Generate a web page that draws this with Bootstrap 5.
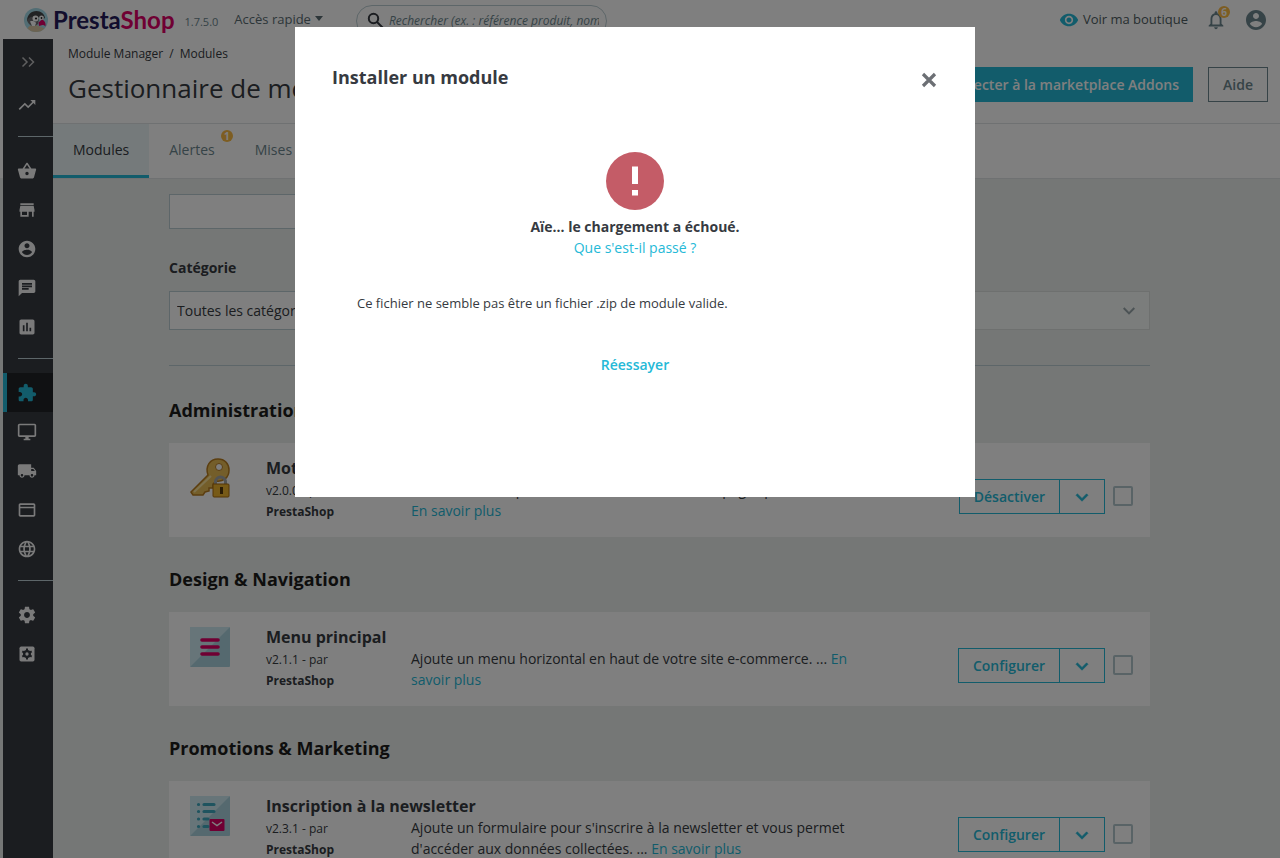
<!DOCTYPE html>
<html lang="fr">
<head>
<meta charset="utf-8">
<meta name="viewport" content="width=device-width, initial-scale=1">
<title>Gestionnaire de modules • PrestaShop</title>
<link href="https://cdn.jsdelivr.net/npm/bootstrap@5.3.0/dist/css/bootstrap.min.css" rel="stylesheet">
<style>
:root { --ps-blue: #25b9d7; --ps-dark: #363a41; --ps-grey: #6c868e; --ps-page: #eaeeec; --ps-line: #bbcdd2; }
body { font: 14px/21px "Open Sans", "Noto Sans", sans-serif; color: var(--ps-dark); background: var(--ps-page); height: 100vh; }
a { color: var(--ps-blue); text-decoration: none; }
svg { display: block; flex: none; }
svg:not([fill]) { fill: currentColor; }
.btn { --bs-btn-font-size: 14px; --bs-btn-font-weight: 600; --bs-btn-border-radius: 0; --bs-btn-line-height: 21px; --bs-btn-padding-y: 6px; --bs-btn-padding-x: 14px; }
.btn-ps { --bs-btn-color: #fff; --bs-btn-bg: var(--ps-blue); --bs-btn-border-color: var(--ps-blue); --bs-btn-hover-bg: #21a6c1; --bs-btn-hover-color: #fff; --bs-btn-padding-x: 13px; }
.btn-ps-outline { --bs-btn-color: var(--ps-blue); --bs-btn-border-color: var(--ps-blue); --bs-btn-hover-bg: var(--ps-blue); --bs-btn-hover-color: #fff; }
.btn-help { --bs-btn-color: var(--ps-grey); --bs-btn-border-color: var(--ps-grey); --bs-btn-hover-bg: var(--ps-grey); --bs-btn-hover-color: #fff; }
.count { position: absolute; width: 12px; height: 12px; border-radius: 50%; background: #fbbb45; color: #fff; font-size: 10px; line-height: 12px; font-weight: 700; text-align: center; }
.count-bell { top: -3px; right: -3px; }
.count-tab { top: 6px; right: 2px; }

.topbar { height: 39px; padding: 0 12px 0 23px; }
.brand { font: 700 24px/26px Lato, sans-serif; color: #251b5b; gap: 4px; }
.brand b { color: #df0067; font-weight: 700; }
.release { font-size: 11px; color: var(--ps-grey); margin: 4px 16px 0 10px; }
.quick { color: #5a6c72; font-size: 13px; }
.quick::after { margin-left: 4px; border-width: 5px 4px 0; }
.search { width: 251px; height: 32px; margin: 2px 0 0 33px; border: 1px solid var(--ps-line); border-radius: 16px; padding: 0 7px 0 10px; }
.search input { border: 0; background: none; min-width: 0; flex: 1; padding: 0; margin-left: 5px; font-size: 12px; font-style: italic; outline: 0; color: var(--ps-dark); }
.search input::placeholder { color: var(--ps-grey); opacity: 1; }
.shop-link { color: #4e5c61; font-size: 13px; gap: 4px; }
.bell { margin: 0 17px; }

.shell { padding-left: 3px; background: linear-gradient(#fff 139px, transparent 139px); }
.sidebar { width: 50px; background: var(--ps-dark); min-height: calc(100vh - 39px); }
.sidebar a { height: 39px; color: #f4f4f4; border-left: 4px solid transparent; padding-right: 6px; }
.sidebar a.toggler { height: 46px; color: #bebebe; padding-right: 4px; }
.sidebar a.active { background: #202226; border-color: var(--ps-blue); color: var(--ps-blue); }
.sidebar .rule { height: 1px; background: #bbcdd2; margin: 12px 0 14px 15px; }

.page-head { height: 85px; border-bottom: 1px solid #dfe3e4; padding: 5px 12px 0 15px; }
.crumbs .breadcrumb { --bs-breadcrumb-font-size: 12px; --bs-breadcrumb-item-padding-x: 6px; --bs-breadcrumb-divider-color: var(--ps-dark); line-height: 20px; }
.crumbs a { color: var(--ps-dark); }
.page-title { font-size: 26px; line-height: 32px; font-weight: 400; margin: 8px 0 0; }
.head-actions { gap: 15px; padding-top: 23px; }
.tabs { height: 55px; border-bottom: 1px solid #dfe3e4; }
.tabs a { padding: 15px 20px; color: var(--ps-grey); border-bottom: 3px solid transparent; line-height: 21px; }
.tabs a.active { background: #eaf4f7; color: var(--ps-dark); border-color: var(--ps-blue); }

.content { padding: 15px 130px 0 116px; }
.tag-search { width: 75%; height: 35px; border: 1px solid var(--ps-line); background: #fff; }
.field-label { font-weight: 700; line-height: 21px; margin: 28px 0 13px; }
.category { height: 39px; border-radius: 0; font-size: 14px; padding: 0 40px 0 7px; color: var(--ps-dark);
  background: url("data:image/svg+xml,%3Csvg xmlns='http://www.w3.org/2000/svg' viewBox='0 0 24 24' fill='%2398a6ab'%3E%3Cpath d='M7.41 8.34 12 12.920l4.590-4.580L18 9.750l-6 6-6-6z'/%3E%3C/svg%3E") no-repeat right 8px center / 24px, linear-gradient(90deg, #fff 50%, #f7fbf8 50%);
  border-image: linear-gradient(90deg, #bbcdd2 50%, #dce1de 50%) 1; }
.divider { margin: 35px 0 0; border-color: var(--ps-line); opacity: 1; }
.group-title { font-size: 18px; font-weight: 700; line-height: 26px; margin: 0 0 20px; color: #1d1d1b; }
.divider + .group-title { margin-top: 31px; }
.module { background: #fff; height: 94px; padding: 15px 17px 0 21px; margin-bottom: 29px; }
.module-logo { width: 40px; margin-right: 36px; }
.module-info { width: 145px; font-size: 12px; }
.module-info h3 { font-size: 16px; font-weight: 700; line-height: 20px; margin: 0 0 2px; white-space: nowrap; }
.module-info p { margin: 0; }
.module-desc { flex: 0 1 448px; padding: 21px 0 0; margin: 0; }
.module-actions { padding-top: 21px; gap: 8px; }
.module-actions .toggle { width: 46px; --bs-btn-padding-x: 10px; }
.toggle svg { margin: -1px 0 -2px; }
.tick { appearance: none; width: 20px; height: 20px; border: 2px solid #b3c7cd; border-radius: 2px; margin: 7px 0 0; background: #fff; }
.tick:checked { background: var(--ps-blue); }

.modal { padding-right: 10px; }
.modal-dialog { max-width: 680px; margin-top: 27px; }
.modal-content { border: 0; border-radius: 0; min-height: 470px; color: var(--ps-dark); }
.modal-header { border: 0; padding: 37px 37px 0; align-items: flex-start; }
.modal-title { font-size: 18px; font-weight: 700; line-height: 26px; }
.close-x { border: 0; background: none; padding: 0; color: #6c6f74; margin: 8px 1px 0 0; }
.modal-body { padding: 62px 62px 0; }
.problem { color: #c45c67; margin: 0 auto 6px; }
.reason { font-size: 13px; line-height: 20px; margin: 35px 0 0; text-align: left; }
.retry { margin-top: 41px; font-weight: 600; display: inline-block; }
</style>
</head>
<body class="modal-open overflow-hidden">

<svg class="d-none" aria-hidden="true">
  <symbol id="chevron" viewBox="0 0 24 24"><path d="M7.410 8.840 12 13.420l4.590-4.580L18 10.250l-6 6-6-6z" stroke="currentColor" stroke-width=".6"/></symbol>
  <symbol id="person" viewBox="0 0 24 24"><path d="M12 2C6.480 2 2 6.480 2 12s4.480 10 10 10 10-4.480 10-10S17.520 2 12 2zm0 3c1.660 0 3 1.340 3 3s-1.340 3-3 3-3-1.340-3-3 1.340-3 3-3zm0 14.200c-2.500 0-4.710-1.280-6-3.220.030-1.990 4-3.080 6-3.080 1.990 0 5.970 1.090 6 3.080-1.290 1.940-3.500 3.220-6 3.220z"/></symbol>
</svg>

<header class="topbar d-flex align-items-center bg-white">
  <a class="brand d-flex align-items-center" href="#">
    <svg width="26" height="26" viewBox="0 0 26 26"><circle cx="13" cy="13" r="12" fill="#a4dbe8"/><path d="M4.500 21.500C7 17.500 10 18 13 18l8.500 3.500c-4 4.500-12.500 5-17 0z" fill="#d8c7a4"/><path d="M4 14C4 8 8 4 13.500 4 18 4 21.500 7 22 11l-3 2-3-2.500-6 1z" fill="#454648"/><path d="M4 13c2-2.500 4-3.500 7-3.500 2 0 4 1 5 2.500l-1 5c-2 2-5 2.500-7 1.500-2-1-3.500-3-4-5.500z" fill="#6c6d70"/><path d="M7 14.500c2-1 4.500-.5 6 1.500l-1 3H9z" fill="#fff"/><circle cx="12.500" cy="11.500" r="3" fill="#fff"/><circle cx="18.500" cy="11" r="2.400" fill="#fff"/><circle cx="13" cy="11.500" r="1.100" fill="#222"/><circle cx="18.500" cy="11" r=".9" fill="#222"/><path d="M15.500 15.500l3.500-3c2.500 1 4 3.500 3.500 7-1-1.500-2-1.500-3-1.500l-3.500 1z" fill="#df0067"/></svg>
    <span>Presta<b>Shop</b></span>
  </a>
  <span class="release">1.7.5.0</span>
  <a class="quick dropdown-toggle" href="#">Accès rapide</a>
  <form class="search d-flex align-items-center" role="search">
    <svg width="17" height="17" viewBox="0 0 17 17" fill="none" stroke="#363a41" stroke-width="2"><circle cx="6.500" cy="6.500" r="4.700"/><path d="M10 10l6 6"/></svg>
    <input type="text" aria-label="Rechercher" placeholder="Rechercher (ex. : référence produit, nom du client…)">
  </form>
  <a class="shop-link d-flex align-items-center ms-auto" href="#">
    <svg width="20" height="20" viewBox="0 0 24 24" fill="#25b9d7"><path d="M12 4.500C7 4.500 2.730 7.610 1 12c1.730 4.390 6 7.500 11 7.500s9.270-3.110 11-7.500c-1.730-4.390-6-7.500-11-7.500zM12 17c-2.760 0-5-2.240-5-5s2.240-5 5-5 5 2.240 5 5-2.240 5-5 5zm0-8c-1.660 0-3 1.340-3 3s1.340 3 3 3 3-1.340 3-3-1.340-3-3-3z"/></svg>
    Voir ma boutique
  </a>
  <a class="bell position-relative" href="#" aria-label="Notifications">
    <svg width="22" height="22" viewBox="0 0 24 24" fill="#6c868e"><path d="M12 22c1.100 0 2-.900 2-2h-4c0 1.100.900 2 2 2zm6-6v-5c0-3.070-1.630-5.640-4.500-6.320V4c0-.830-.670-1.500-1.500-1.500s-1.500.670-1.500 1.500v.680C7.640 5.360 6 7.920 6 11v5l-2 2v1h16v-1l-2-2zm-2 1H8v-6c0-2.480 1.510-4.500 4-4.500s4 2.020 4 4.500v6z"/></svg>
    <span class="count count-bell">6</span>
  </a>
  <a href="#" aria-label="Compte"><svg width="24" height="24" fill="#6c868e"><use href="#person"/></svg></a>
</header>

<div class="shell d-flex">
  <nav class="sidebar flex-shrink-0" aria-label="Menu principal">
    <a class="toggler d-flex align-items-center justify-content-center" href="#" aria-label="Déplier"><svg width="14" height="12" viewBox="0 0 14 12" fill="none" stroke="currentColor" stroke-width="1.500"><path d="M1.500 1.500 6 6l-4.500 4.500M8 1.500 12.500 6 8 10.500"/></svg></a>
    <a class="d-flex align-items-center justify-content-center" href="#" aria-label="Tableau de bord"><svg width="20" height="20" viewBox="0 0 24 24"><path d="M16 6l2.290 2.290-4.880 4.880-4-4L2 16.590 3.410 18l6-6 4 4 6.300-6.290L22 12V6z"/></svg></a>
    <div class="rule"></div>
    <a class="d-flex align-items-center justify-content-center" href="#" aria-label="Commandes"><svg width="20" height="20" viewBox="0 0 24 24"><path d="M17.210 9l-4.380-6.560c-.190-.280-.510-.420-.830-.420-.320 0-.640.140-.830.430L6.790 9H2c-.550 0-1 .450-1 1 0 .090.010.180.040.270l2.540 9.270c.230.840 1 1.460 1.920 1.460h13c.920 0 1.690-.620 1.930-1.460l2.540-9.270L23 10c0-.550-.450-1-1-1h-4.790zM9 9l3-4.400L15 9H9zm3 8c-1.100 0-2-.900-2-2s.900-2 2-2 2 .900 2 2-.900 2-2 2z"/></svg></a>
    <a class="d-flex align-items-center justify-content-center" href="#" aria-label="Catalogue"><svg width="20" height="20" viewBox="0 0 24 24"><path d="M20 4H4v2h16V4zm1 10v-2l-1-5H4l-1 5v2h1v6h10v-6h4v6h2v-6h1zm-9 4H6v-4h6v4z"/></svg></a>
    <a class="d-flex align-items-center justify-content-center" href="#" aria-label="Clients"><svg width="20" height="20"><use href="#person"/></svg></a>
    <a class="d-flex align-items-center justify-content-center" href="#" aria-label="SAV"><svg width="20" height="20" viewBox="0 0 24 24"><path d="M20 2H4c-1.100 0-1.990.900-1.990 2L2 22l4-4h14c1.100 0 2-.900 2-2V4c0-1.100-.900-2-2-2zM6 9h12v2H6V9zm8 5H6v-2h8v2zm4-6H6V6h12v2z"/></svg></a>
    <a class="d-flex align-items-center justify-content-center" href="#" aria-label="Statistiques"><svg width="20" height="20" viewBox="0 0 24 24"><path d="M19 3H5c-1.100 0-2 .900-2 2v14c0 1.100.900 2 2 2h14c1.100 0 2-.900 2-2V5c0-1.100-.900-2-2-2zM9 17H7v-7h2v7zm4 0h-2V7h2v10zm4 0h-2v-4h2v4z"/></svg></a>
    <div class="rule"></div>
    <a class="active d-flex align-items-center justify-content-center" href="#" aria-label="Modules"><svg width="20" height="20" viewBox="0 0 24 24"><path d="M20.500 11H19V7c0-1.100-.900-2-2-2h-4V3.500C13 2.120 11.880 1 10.500 1S8 2.120 8 3.500V5H4c-1.100 0-1.990.900-1.990 2v3.800H3.500c1.490 0 2.700 1.210 2.700 2.700s-1.210 2.700-2.700 2.700H2V20c0 1.100.900 2 2 2h3.800v-1.500c0-1.490 1.210-2.700 2.700-2.700 1.490 0 2.700 1.210 2.700 2.700V22H17c1.100 0 2-.900 2-2v-4h1.500c1.380 0 2.500-1.120 2.500-2.500S21.880 11 20.500 11z"/></svg></a>
    <a class="d-flex align-items-center justify-content-center" href="#" aria-label="Apparence"><svg width="20" height="20" viewBox="0 0 24 24"><path d="M21 2H3c-1.100 0-2 .900-2 2v12c0 1.100.900 2 2 2h7v2H8v2h8v-2h-2v-2h7c1.100 0 2-.900 2-2V4c0-1.100-.900-2-2-2zm0 14H3V4h18v12z"/></svg></a>
    <a class="d-flex align-items-center justify-content-center" href="#" aria-label="Livraison"><svg width="20" height="20" viewBox="0 0 24 24"><path d="M20 8h-3V4H3c-1.100 0-2 .900-2 2v11h2c0 1.660 1.340 3 3 3s3-1.340 3-3h6c0 1.660 1.340 3 3 3s3-1.340 3-3h2v-5l-3-4zM6 18.500c-.830 0-1.500-.670-1.500-1.500s.670-1.500 1.500-1.500 1.500.670 1.500 1.500-.670 1.500-1.500 1.500zm13.500-9l1.960 2.500H17V9.500h2.500zm-1.500 9c-.830 0-1.500-.670-1.500-1.500s.670-1.500 1.500-1.500 1.500.670 1.500 1.500-.670 1.500-1.500 1.500z"/></svg></a>
    <a class="d-flex align-items-center justify-content-center" href="#" aria-label="Paiement"><svg width="20" height="20" viewBox="0 0 24 24"><path d="M20 4H4c-1.110 0-1.990.890-1.990 2L2 18c0 1.110.890 2 2 2h16c1.110 0 2-.890 2-2V6c0-1.110-.890-2-2-2zm0 14H4V10h16v8zm0-10H4V6h16v2z"/></svg></a>
    <a class="d-flex align-items-center justify-content-center" href="#" aria-label="International"><svg width="20" height="20" viewBox="0 0 24 24"><path d="M11.990 2C6.470 2 2 6.480 2 12s4.470 10 9.990 10C17.520 22 22 17.520 22 12S17.520 2 11.990 2zm6.930 6h-2.950c-.320-1.250-.780-2.450-1.380-3.560 1.840.630 3.370 1.910 4.330 3.560zM12 4.040c.830 1.200 1.480 2.530 1.910 3.960h-3.820c.430-1.430 1.080-2.760 1.910-3.960zM4.260 14C4.100 13.360 4 12.690 4 12s.100-1.360.260-2h3.380c-.080.660-.140 1.320-.140 2s.060 1.340.140 2H4.260zm.820 2h2.950c.320 1.250.780 2.450 1.380 3.560-1.840-.630-3.370-1.900-4.330-3.560zm2.950-8H5.080c.960-1.660 2.490-2.930 4.330-3.560C8.810 5.550 8.350 6.750 8.030 8zM12 19.960c-.830-1.200-1.480-2.530-1.910-3.960h3.820c-.430 1.430-1.080 2.760-1.910 3.960zM14.340 14H9.660c-.090-.660-.160-1.320-.160-2s.070-1.350.160-2h4.680c.090.650.160 1.320.160 2s-.070 1.340-.160 2zm.250 5.560c.600-1.110 1.060-2.310 1.380-3.560h2.950c-.960 1.650-2.490 2.930-4.330 3.560zM16.360 14c.080-.660.140-1.320.140-2s-.060-1.340-.140-2h3.380c.160.640.260 1.310.260 2s-.100 1.360-.260 2h-3.380z"/></svg></a>
    <div class="rule"></div>
    <a class="d-flex align-items-center justify-content-center" href="#" aria-label="Paramètres de la boutique"><svg width="20" height="20" viewBox="0 0 24 24"><path d="M19.430 12.980c.040-.320.070-.640.070-.980s-.030-.660-.070-.980l2.110-1.650c.190-.150.240-.420.120-.640l-2-3.460c-.120-.220-.390-.300-.610-.220l-2.490 1c-.520-.400-1.080-.730-1.690-.980l-.380-2.650C14.460 2.180 14.250 2 14 2h-4c-.250 0-.460.180-.490.420l-.380 2.650c-.610.250-1.170.590-1.690.980l-2.490-1c-.230-.090-.490 0-.610.220l-2 3.460c-.130.220-.070.490.120.640l2.110 1.650c-.040.320-.070.650-.070.980s.030.660.070.980l-2.110 1.650c-.190.150-.240.420-.120.640l2 3.460c.120.220.390.300.610.220l2.490-1c.520.400 1.080.730 1.690.980l.380 2.650c.030.240.240.420.490.420h4c.250 0 .460-.180.490-.420l.380-2.650c.610-.250 1.170-.590 1.690-.980l2.490 1c.230.090.490 0 .610-.220l2-3.460c.120-.220.070-.490-.120-.640l-2.110-1.650zM12 15.500c-1.930 0-3.500-1.570-3.500-3.500s1.570-3.500 3.500-3.500 3.500 1.570 3.500 3.500-1.570 3.500-3.500 3.500z"/></svg></a>
    <a class="d-flex align-items-center justify-content-center" href="#" aria-label="Paramètres avancés"><svg width="20" height="20" viewBox="0 0 24 24"><rect x="3" y="3" width="18" height="18" rx="2"/><g fill="#363a41"><circle cx="12" cy="12" r="4.800"/><path d="M10.800 5.500h2.400v13h-2.400z"/><path d="M10.800 5.500h2.400v13h-2.400z" transform="rotate(60 12 12)"/><path d="M10.800 5.500h2.400v13h-2.400z" transform="rotate(120 12 12)"/></g><circle cx="12" cy="12" r="2"/></svg></a>
  </nav>

  <main class="flex-grow-1">
    <div class="bg-white">
      <div class="page-head d-flex justify-content-between">
        <div>
          <nav class="crumbs" aria-label="Fil d'Ariane"><ol class="breadcrumb mb-0"><li class="breadcrumb-item"><a href="#">Module Manager</a></li><li class="breadcrumb-item"><a href="#">Modules</a></li></ol></nav>
          <h1 class="page-title">Gestionnaire de modules</h1>
        </div>
        <div class="head-actions d-flex align-items-start">
          <button type="button" class="btn btn-ps">Se connecter à la marketplace Addons</button>
          <button type="button" class="btn btn-help">Aide</button>
        </div>
      </div>
      <nav class="tabs d-flex" aria-label="Onglets">
        <a class="active" href="#">Modules</a>
        <a class="position-relative" href="#">Alertes<span class="count count-tab">1</span></a>
        <a href="#">Mises à jour</a>
      </nav>
    </div>

    <div class="content">
      <input class="tag-search d-block" type="text" aria-label="Rechercher un module">
      <label class="field-label d-block" for="category">Catégorie</label>
      <select class="category form-select" id="category"><option>Toutes les catégories</option></select>
      <hr class="divider">

      <h2 class="group-title">Administration</h2>
      <article class="module d-flex">
        <div class="module-logo"><svg width="40" height="40" viewBox="0 0 40 40">
          <path d="M1 34 18 17C15 8 20 1 28 1c7 0 11 5 11 11 0 8-6 12-13 11l-3 3v4h-4v3l-4 1-2 3H3z" fill="#e9bc55" stroke="#b87d20" stroke-width="1.500"/><path d="M4 34 21 18" stroke="#fbe39a" stroke-width="2"/><circle cx="29" cy="9" r="3.500" fill="#fff" stroke="#b87d20"/>
          <path d="M25.500 27v-3a5 5 0 0 1 10 0v3" fill="none" stroke="#a3a6a8" stroke-width="3"/><rect x="23" y="26" width="16" height="13" rx="1" fill="#efb52f" stroke="#a96a0c"/><path d="M30 29h3v7h-3z" fill="#55380a"/></svg></div>
        <div class="module-info"><h3>Mot de passe</h3><p>v2.0.0 - par</p><p><b>PrestaShop</b></p></div>
        <p class="module-desc">Crée un mot de passe afin de bien sécuriser les pages privées. <a class="d-block" href="#">En savoir plus</a></p>
        <div class="module-actions d-flex align-items-start ms-auto">
          <div class="btn-group"><button type="button" class="btn btn-ps-outline">Désactiver</button><button type="button" class="btn btn-ps-outline toggle" aria-label="Plus d'actions"><svg width="24" height="24"><use href="#chevron"/></svg></button></div>
          <input class="tick" type="checkbox" aria-label="Sélectionner Mot de passe">
        </div>
      </article>

      <h2 class="group-title">Design &amp; Navigation</h2>
      <article class="module d-flex">
        <div class="module-logo"><svg width="40" height="40" viewBox="0 0 40 40"><rect width="40" height="40" rx="1" fill="#aad3de"/><path d="M0 0h40L0 40z" fill="#cfebf3"/><path d="M12 13h16M12 20h16M12 27h16" stroke="#df0067" stroke-width="3.600" stroke-linecap="round"/></svg></div>
        <div class="module-info"><h3>Menu principal</h3><p>v2.1.1 - par</p><p><b>PrestaShop</b></p></div>
        <p class="module-desc">Ajoute un menu horizontal en haut de votre site e-commerce. ... <a href="#">En savoir plus</a></p>
        <div class="module-actions d-flex align-items-start ms-auto">
          <div class="btn-group"><button type="button" class="btn btn-ps-outline">Configurer</button><button type="button" class="btn btn-ps-outline toggle" aria-label="Plus d'actions"><svg width="24" height="24"><use href="#chevron"/></svg></button></div>
          <input class="tick" type="checkbox" aria-label="Sélectionner Menu principal">
        </div>
      </article>

      <h2 class="group-title">Promotions &amp; Marketing</h2>
      <article class="module d-flex">
        <div class="module-logo"><svg width="40" height="40" viewBox="0 0 40 40"><rect width="40" height="40" rx="1" fill="#aad3de"/><path d="M0 0h40L0 40z" fill="#cfebf3"/><path d="M8.500 8.500h.1M14 8.500h10M8.500 15.500h.1M14 15.500h10M8.500 23h.1M14 23h4M8.500 30.500h.1M14 30.500h4" stroke="#3fa9bf" stroke-width="3.200" stroke-linecap="round"/><rect x="19.500" y="23" width="15" height="12" rx="1" fill="#df0067"/><path d="M22 26l5 3.500 5-3.500" fill="none" stroke="#fff" stroke-width="1.500"/></svg></div>
        <div class="module-info"><h3>Inscription à la newsletter</h3><p>v2.3.1 - par</p><p><b>PrestaShop</b></p></div>
        <p class="module-desc">Ajoute un formulaire pour s'inscrire à la newsletter et vous permet d'accéder aux données collectées. ... <a href="#">En savoir plus</a></p>
        <div class="module-actions d-flex align-items-start ms-auto">
          <div class="btn-group"><button type="button" class="btn btn-ps-outline">Configurer</button><button type="button" class="btn btn-ps-outline toggle" aria-label="Plus d'actions"><svg width="24" height="24"><use href="#chevron"/></svg></button></div>
          <input class="tick" type="checkbox" aria-label="Sélectionner Inscription à la newsletter">
        </div>
      </article>
    </div>
  </main>
</div>

<div class="modal-backdrop show"></div>
<div class="modal show d-block" tabindex="-1" role="dialog" aria-modal="true" aria-labelledby="install-title">
  <div class="modal-dialog">
    <div class="modal-content">
      <div class="modal-header">
        <h4 class="modal-title" id="install-title">Installer un module</h4>
        <button type="button" class="close-x" aria-label="Fermer"><svg width="16" height="16" viewBox="0 0 16 16" fill="none" stroke="currentColor" stroke-width="3.200"><path d="M2 2l12 12M14 2 2 14"/></svg></button>
      </div>
      <div class="modal-body text-center">
        <svg class="problem" width="58" height="58" viewBox="0 0 58 58"><circle cx="29" cy="29" r="29"/><path d="M26 14.500h6V32h-6zM26 38h6v5.500h-6z" fill="#fff"/></svg>
        <div class="fw-bold">Aïe... le chargement a échoué.</div>
        <a href="#">Que s'est-il passé ?</a>
        <p class="reason">Ce fichier ne semble pas être un fichier .zip de module valide.</p>
        <a class="retry" href="#">Réessayer</a>
      </div>
    </div>
  </div>
</div>

<script src="https://cdn.jsdelivr.net/npm/bootstrap@5.3.0/dist/js/bootstrap.bundle.min.js"></script>
</body>
</html>
